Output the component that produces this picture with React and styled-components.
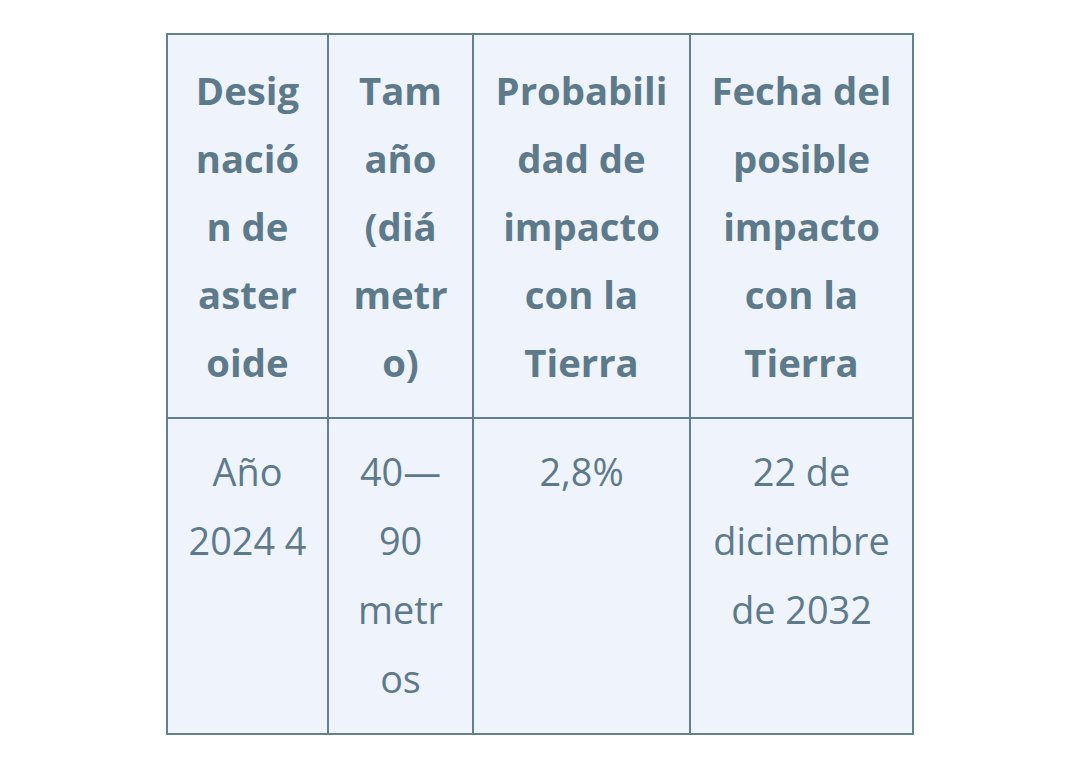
import React from 'react';
import styled, { createGlobalStyle } from 'styled-components';

const GlobalStyle = createGlobalStyle`
	html, body {
		margin: 0;
		padding: 0;
		background: #ffffff;
	}
`;

const Page = styled.div`
	display: flex;
	justify-content: center;
	padding-top: 33px;
	font-family: 'Open Sans', sans-serif;
	color: #5d7a8b;
`;

const Table = styled.table`
	table-layout: fixed;
	border-collapse: collapse;
	width: 746px;
	background: #eff3fb;
`;

const HeadCell = styled.th`
	border: 2px solid #62808f;
	padding: 21px 20px;
	font-size: 38.3px;
	font-weight: 700;
	line-height: 68px;
	text-align: center;
	vertical-align: top;
	overflow-wrap: anywhere;
`;

const Cell = styled.td`
	border: 2px solid #62808f;
	padding: 18px 20px 20px;
	font-size: 37.8px;
	font-weight: 400;
	line-height: 69px;
	text-align: center;
	vertical-align: top;
	overflow-wrap: anywhere;
`;

const columns = [161, 145, 217, 223];

const headers = [
	'Designación de asteroide',
	'Tamaño (diámetro)',
	'Probabilidad de impacto con la Tierra',
	'Fecha del posible impacto con la Tierra',
];

const row = ['Año 2024 4', '40—90 metros', '2,8%', '22 de diciembre de 2032'];

export default function App() {
	return (
		<>
			<GlobalStyle />
			<Page>
				<Table>
					<colgroup>
						{columns.map((w, i) => (
							<col key={i} style={{ width: w }} />
						))}
					</colgroup>
					<thead>
						<tr>
							{headers.map(h => (
								<HeadCell key={h}>{h}</HeadCell>
							))}
						</tr>
					</thead>
					<tbody>
						<tr>
							{row.map(c => (
								<Cell key={c}>{c}</Cell>
							))}
						</tr>
					</tbody>
				</Table>
			</Page>
		</>
	);
}
